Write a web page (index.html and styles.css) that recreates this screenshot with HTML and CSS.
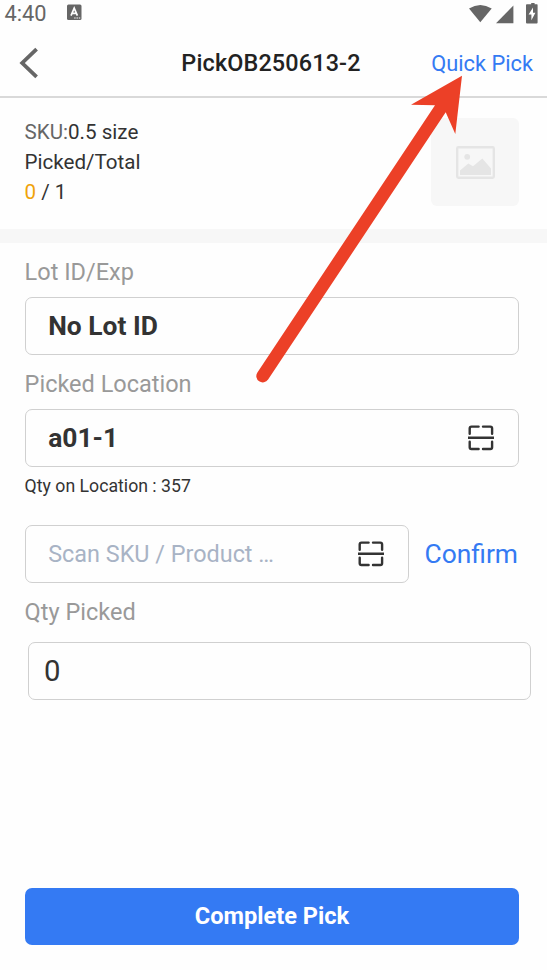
FILE: index.html
```html
<!DOCTYPE html>
<html>
<head>
	<meta charset="utf-8">
	<title>PickOB250613-2</title>
	<link rel="stylesheet" href="styles.css">
</head>
<body>
	<div class="page">
		<div class="status">
			<span class="time">4:40</span>
			<svg class="lang" width="15" height="17" viewBox="0 0 15 17">
				<rect x="0" y="0.5" width="14.5" height="15.5" rx="1.5" fill="#666"/>
				<path d="M4 11.6L7.2 4.2L10.4 11.6M5.2 9.4H9.2" fill="none" stroke="#fff" stroke-width="1.7"/>
				<path d="M7.2 14H13.6" stroke="#fff" stroke-width="1.1" stroke-dasharray="1.4 0.9"/>
			</svg>
			<svg class="signal" width="72" height="22" viewBox="0 0 72 22">
				<path d="M1 6.6Q12.3 -0.6 23.7 6.6L12.3 20.2Z" fill="#666"/>
				<path d="M28 21.3L45.4 3.4V21.3Z" fill="#666"/>
				<path d="M60.8 2.2H63.2V1H66.6V2.2H69Q69.6 2.2 69.6 3V20.5Q69.6 21.4 68.7 21.4H59Q58 21.4 58 20.5V3Q58 2.2 58.9 2.2Z" fill="#666"/>
				<path d="M65 5.6L60.6 12.6H63.4V18.2L67.4 10.8H65Z" fill="#fff"/>
			</svg>
		</div>
		<div class="header">
			<svg class="back" width="20" height="32" viewBox="0 0 20 32">
				<path d="M17.6 2.2L3.2 16L17.6 29.8" fill="none" stroke="#666" stroke-width="3.8"/>
			</svg>
			<h1>PickOB250613-2</h1>
			<a class="quick" href="javascript:;">Quick Pick</a>
		</div>
		<div class="info">
			<div class="info-text">
				<p><span class="gray">SKU:</span>0.5 size</p>
				<p>Picked/Total</p>
				<p><span class="orange">0</span> / 1</p>
			</div>
			<div class="thumb">
				<svg width="39" height="33" viewBox="0 0 39 33">
					<rect x="1.2" y="1.2" width="36.6" height="30.6" rx="1.2" fill="none" stroke="#e5e5e5" stroke-width="2.4"/>
					<circle cx="11.2" cy="10.8" r="2.9" fill="#e5e5e5"/>
					<path d="M4 29V24.6L12.3 17.6L17 20.2L26.3 12.4L35 22.6V29Z" fill="#e5e5e5"/>
				</svg>
			</div>
		</div>
		<div class="form">
			<label>Lot ID/Exp</label>
			<div class="box bold">No Lot ID</div>
			<label>Picked Location</label>
			<div class="box bold">
				<span>a01-1</span>
				<svg class="scan" width="26" height="26" viewBox="0 0 26 26">
					<path d="M1.7 8.8V3.4Q1.7 1.6 3.5 1.6H10.6M15 1.6H22.3Q24.1 1.6 24.1 3.4V8.8M1.7 16.8V22.2Q1.7 24 3.5 24H10.6M15 24H22.3Q24.1 24 24.1 22.2V16.8M0.2 12.8H25.8"/>
				</svg>
			</div>
			<p class="stock">Qty on Location : 357</p>
			<div class="scan-row">
				<div class="box holder">
					<span>Scan SKU / Product …</span>
					<svg class="scan" width="26" height="26" viewBox="0 0 26 26">
						<path d="M1.7 8.8V3.4Q1.7 1.6 3.5 1.6H10.6M15 1.6H22.3Q24.1 1.6 24.1 3.4V8.8M1.7 16.8V22.2Q1.7 24 3.5 24H10.6M15 24H22.3Q24.1 24 24.1 22.2V16.8M0.2 12.8H25.8"/>
					</svg>
				</div>
				<a class="confirm" href="javascript:;">Confirm</a>
			</div>
			<label class="qty-label">Qty Picked</label>
			<div class="box qty">0</div>
		</div>
		<a class="complete" href="javascript:;">Complete Pick</a>
		<svg class="arrow" width="210" height="310" viewBox="0 0 210 310">
			<path d="M207 0.7L156 29.7L180 30.3L2.4 297.4A6.4 6.4 0 0 0 13.1 304.6L190.7 37.3L200.3 59Z" fill="#ec4027"/>
		</svg>
	</div>
</body>
</html>
```

FILE: styles.css
```css
*{margin: 0;padding: 0;box-sizing: border-box;}
body {
	font-family: Roboto, "Liberation Sans", sans-serif;
	color: #333;
	background: #fefefe;
}
a {
	text-decoration: none;
	color: #347af3;
}
svg {
	display: block;
	flex-shrink: 0;
}
.page {
	position: relative;
	width: 547px;
	height: 970px;
	display: flex;
	flex-direction: column;
	overflow: hidden;
}
.status {
	height: 28px;
	padding: 0 7px 3px 4.5px;
	display: flex;
	align-items: center;
	color: #666;
}
.time {
	width: 62px;
	padding-top: 1px;
	font-size: 21.8px;
	line-height: 25px;
}
.signal {
	margin-left: auto;
}
.header {
	height: 70px;
	padding: 2px 14px 0 19px;
	border-bottom: 2px solid #d9d9d9;
	display: grid;
	grid-template-columns: 125px 1fr 135px;
	align-items: center;
}
h1 {
	font-size: 23.4px;
	font-weight: 500;
	line-height: 30px;
	letter-spacing: 0.15px;
	text-align: center;
	color: #222;
	white-space: nowrap;
}
.quick {
	font-size: 21.8px;
	text-align: right;
	white-space: nowrap;
}
.info {
	height: 145px;
	padding: 19px 28px 0 24.5px;
	border-bottom: 14px solid #f7f7f7;
	display: flex;
	justify-content: space-between;
}
.info-text {
	font-size: 20.6px;
	line-height: 30px;
}
.gray {
	color: #666;
}
.orange {
	color: #f0a30a;
}
.thumb {
	width: 88px;
	height: 88px;
	margin-top: 1px;
	border-radius: 6px;
	background: #f7f7f7;
	display: flex;
	align-items: center;
	justify-content: center;
}
.form {
	padding: 0 28px 0 24.6px;
}
label {
	display: block;
	height: 54px;
	font-size: 23.5px;
	line-height: 58px;
	color: #999;
}
.box {
	height: 58px;
	padding: 0 24px 0 22.6px;
	border: 1px solid #d0d0d0;
	border-radius: 7px;
	display: flex;
	align-items: center;
	justify-content: space-between;
	white-space: nowrap;
}
.bold {
	font-size: 26.4px;
	font-weight: 700;
}
.scan path {
	fill: none;
	stroke: #333;
	stroke-width: 2.4;
	stroke-linecap: round;
}
.stock {
	height: 58px;
	font-size: 17.7px;
	line-height: 38px;
}
.scan-row {
	display: flex;
	align-items: center;
	justify-content: space-between;
}
.holder {
	width: 384.4px;
	font-size: 23.4px;
	color: #a8b3c5;
}
.confirm {
	margin-right: 1px;
	font-size: 26.4px;
}
.qty-label {
	height: 59px;
}
.qty {
	width: 503px;
	margin-left: 3.4px;
	padding-left: 15px;
	font-size: 29.3px;
}
.complete {
	height: 57px;
	margin: auto 28px 25px 25px;
	border-radius: 7px;
	font-size: 23.6px;
	font-weight: 700;
	line-height: 56px;
	text-align: center;
	color: #fff;
	background: #347af3;
}
/* pointer drawn over the page */
.arrow {
	position: absolute;
	left: 255px;
	top: 75px;
}
```
